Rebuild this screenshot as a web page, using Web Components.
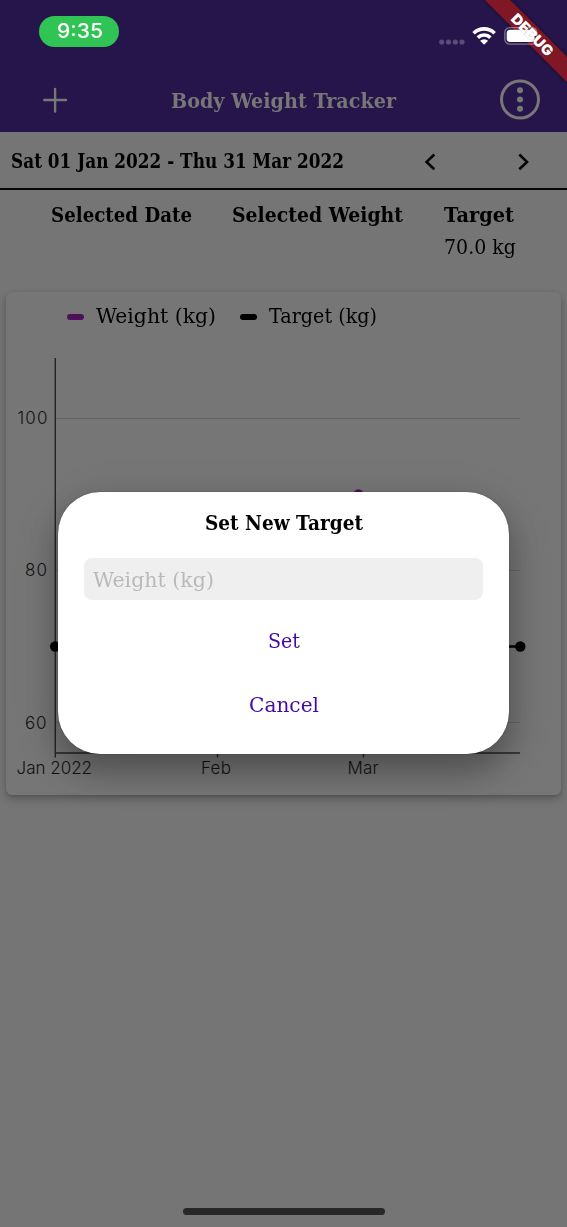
<!DOCTYPE html>
<html lang="en">
<head>
<meta charset="utf-8">
<title>Body Weight Tracker</title>
<style>
html,body{margin:0;height:100%;overflow:hidden;background:#757575}
body{font-family:"DejaVu Serif",serif;font-size:19.5px;color:#000}
</style>
</head>
<body>
<weight-app></weight-app>
<script>
const define = (name, html, ready) => customElements.define(name, class extends HTMLElement {
  connectedCallback() {
    if (this.shadowRoot) return;
    const root = this.attachShadow({ mode: 'open' });
    const t = document.createElement('template');
    t.innerHTML = html;
    root.append(t.content.cloneNode(true));
    if (ready) ready(this, root);
  }
});

/* A single line of text, scaled to the width given in its w attribute. */
define('fit-text', `<style>:host{display:block;white-space:nowrap;line-height:32px;flex:none}span{display:inline-block;transform-origin:0 50%}</style><span><slot></slot></span>`, (el, root) => {
  const w = +el.getAttribute('w'), span = root.querySelector('span');
  el.style.width = w + 'px';
  span.style.transform = 'scaleX(' + (w + 1) / span.getBoundingClientRect().width + ')';
});

define('status-bar', `<style>
:host{display:flex;height:62px;align-items:flex-start;justify-content:space-between;position:relative}
.time{box-sizing:border-box;width:80px;height:31px;margin:16px 0 0 39px;border-radius:16px;background:#30c455;color:#fff;display:flex;justify-content:center;align-items:center;font:500 20px Inter,sans-serif}
.time fit-text{line-height:31px}
svg{display:block}
</style>
<div class="time"><fit-text w="45">9:35</fit-text></div>
<svg width="150" height="90" viewBox="417 0 150 90">
<defs><filter id="s" x="-20%" y="-100%" width="140%" height="300%"><feGaussianBlur stdDeviation="2"/></filter></defs>
<g transform="translate(532 34.5) rotate(45)">
<rect x="-90" y="-9" width="180" height="18" fill="#000" opacity=".45" filter="url(#s)"/>
<rect x="-90" y="-9" width="180" height="18" fill="#801725"/></g>
<g fill="#584c78"><circle cx="441.7" cy="42" r="2.6"/><circle cx="448.5" cy="42" r="2.6"/><circle cx="455.3" cy="42" r="2.6"/><circle cx="462" cy="42" r="2.6"/></g>
<g fill="none" stroke="#fff" stroke-width="3.6"><path d="M473.6 33.2a15 15 0 0 1 21 0"/><path d="M477.8 37.6a9 9 0 0 1 12.6 0"/></g>
<path d="M480.1 40.8a5.8 5.8 0 0 1 8 0L484.1 44.8z" fill="#fff"/>
<rect x="504.8" y="27.6" width="32" height="16.6" rx="5" fill="none" stroke="#fff" stroke-opacity=".4" stroke-width="1.3"/>
<rect x="506.7" y="29.7" width="27.8" height="12.4" rx="3.5" fill="#fff"/>
<g transform="translate(532 34.5) rotate(45)"><text x="-26" y="5.2" textLength="53" lengthAdjust="spacingAndGlyphs" font-family="Inter,sans-serif" font-weight="900" font-size="14.5" fill="#fff" style="paint-order:stroke;stroke:#2a102c;stroke-opacity:.2;stroke-width:1px">DEBUG</text></g>
</svg>`);

define('nav-bar', `<style>
:host{display:grid;grid-template-columns:171px 1fr 67px;height:70px;align-items:center;color:#777}
fit-text{font-weight:700;padding-top:9px}
svg{display:block}
</style>
<svg width="171" height="70" viewBox="0 62 171 70"><path d="M44.2 100H66M55.1 89V111.5" stroke="#777" stroke-width="2.4" stroke-linecap="round"/></svg>
<fit-text w="224">Body Weight Tracker</fit-text>
<svg width="67" height="70" viewBox="500 62 67 70"><circle cx="520" cy="99.5" r="18.5" fill="none" stroke="#777" stroke-width="3"/><g fill="#777"><circle cx="520" cy="90.3" r="3"/><circle cx="520" cy="99.5" r="3"/><circle cx="520" cy="108.7" r="3"/></g></svg>`);

define('date-range', `<style>
:host{display:flex;box-sizing:border-box;height:58px;padding:3px 0 0 11px;align-items:center;border-bottom:2px solid #080808}
fit-text{font-weight:700}svg{display:block;margin-left:69px}
</style>
<fit-text w="332">Sat 01 Jan 2022 - Thu 31 Mar 2022</fit-text>
<svg width="130" height="32" viewBox="412 145.5 130 32"><path d="M434.3 154L426.6 161.4L434.3 168.8M519.3 154L527 161.4L519.3 168.8" fill="none" stroke="#050505" stroke-width="2.6"/></svg>`);

define('summary-row', `<style>
:host{display:grid;grid-template-columns:140px 170px 70px;column-gap:41px;height:93px;padding:10px 0 0 51px;box-sizing:border-box;align-content:start}
.last{margin-left:1px}
b{display:block}
</style>
<b><fit-text w="140">Selected Date</fit-text></b><b><fit-text w="170">Selected Weight</fit-text></b>
<div class="last"><b><fit-text w="69">Target</fit-text></b><fit-text w="71">70.0 kg</fit-text></div>`);

define('chart-card', `<style>
:host{display:block;box-sizing:border-box;height:503px;margin:9px 6px 0;border-radius:6px;background:#767676;box-shadow:0 4px 8px rgba(0,0,0,.24),0 1px 3px rgba(0,0,0,.1)}
.legend{display:flex;align-items:center;height:50px;padding-left:61px}
i{width:17px;height:6px;border-radius:3px;background:#4c1157;margin-right:12px}
i.k{background:#000;margin-left:25px}
svg{display:block}
</style>
<div class="legend"><i></i><fit-text w="119">Weight (kg)</fit-text><i class="k"></i><fit-text w="107">Target (kg)</fit-text></div>
<svg width="555" height="450" viewBox="6 342 555 450">
<g stroke="#656565"><path d="M56 418.5H520M56 570.5H520M56 722.5H520"/></g>
<path d="M55.3 358V753H520M217.5 753V757.5M363.5 753V757.5M55.3 753V757.5" fill="none" stroke="#242424" stroke-width="1.4"/>
<path d="M55 646.5H520" stroke="#000" stroke-width="2.4"/><circle cx="55.2" cy="646.5" r="5.2"/><circle cx="520.3" cy="646.5" r="5.2"/>
<circle cx="358.5" cy="494.5" r="5.2" fill="#4c1157"/>
<g font-family="Inter,sans-serif" font-weight="300" font-size="17" fill="#121212">
<text x="17.5" y="423.5" textLength="30">100</text><text x="25" y="576" textLength="22">80</text><text x="25" y="728.5" textLength="21.5">60</text>
<text x="16.5" y="774" textLength="75.5">Jan 2022</text><text x="201" y="774" textLength="30">Feb</text><text x="347.5" y="774" textLength="31">Mar</text></g>
</svg>`);

define('target-dialog', `<style>
:host{position:absolute;left:58px;top:492px;width:451px;height:262px;box-sizing:border-box;padding:16px 26px 0;border-radius:42px;background:#fff;box-shadow:0 0 1px #222,0 17px 30px rgba(0,0,0,.26),0 12px 50px rgba(0,0,0,.12);display:flex;flex-direction:column;align-items:center}
.title{font-weight:700}
.field{align-self:stretch;box-sizing:border-box;height:42px;margin:18px 0 0;padding:7px 9px;border-radius:8px;background:#efefef;color:#b9b9b9}
.field fit-text{line-height:31px}
.action{color:#430aa5}
</style>
<fit-text class="title" w="157">Set New Target</fit-text>
<div class="field"><fit-text w="120">Weight (kg)</fit-text></div>
<fit-text class="action" w="31" style="margin-top:26px">Set</fit-text>
<fit-text class="action" w="69" style="margin-top:32px">Cancel</fit-text>`);

define('weight-app', `<style>
:host{display:flex;flex-direction:column;position:relative;width:567px;height:1227px;overflow:hidden;background:#757575}
header{background:#25154b;height:132px;flex:none}
.home{width:202px;height:7px;border-radius:4px;background:#282828;margin:auto auto 12px}
</style>
<header><status-bar></status-bar><nav-bar></nav-bar></header>
<date-range></date-range><summary-row></summary-row><chart-card></chart-card>
<div class="home"></div>
<target-dialog></target-dialog>`);
</script>
</body>
</html>
